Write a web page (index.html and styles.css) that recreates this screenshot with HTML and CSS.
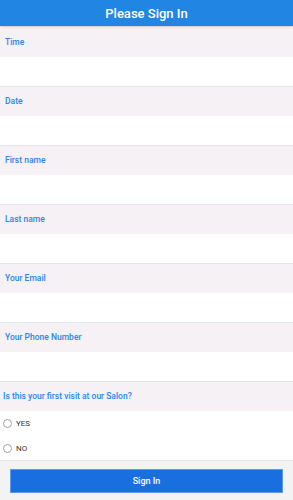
FILE: index.html
```html
<!DOCTYPE html>
<html lang="en">
<head>
    <meta charset="UTF-8">
    <meta name="viewport" content="width=device-width, initial-scale=1.0">
    <title>Please Sign In</title>
    <link rel="stylesheet" href="styles.css">
</head>
<body>
    <div class="header">Please Sign In</div>
    <form class="signin">
        <div class="field">
            <label class="field-label" for="time">Time</label>
            <input class="field-input" type="text" id="time" name="time">
        </div>
        <div class="field">
            <label class="field-label" for="date">Date</label>
            <input class="field-input" type="text" id="date" name="date">
        </div>
        <div class="field">
            <label class="field-label" for="first-name">First name</label>
            <input class="field-input" type="text" id="first-name" name="first-name">
        </div>
        <div class="field">
            <label class="field-label" for="last-name">Last name</label>
            <input class="field-input" type="text" id="last-name" name="last-name">
        </div>
        <div class="field">
            <label class="field-label" for="email">Your Email</label>
            <input class="field-input" type="email" id="email" name="email">
        </div>
        <div class="field">
            <label class="field-label" for="phone">Your Phone Number</label>
            <input class="field-input" type="tel" id="phone" name="phone">
        </div>
        <div class="field">
            <div class="field-label question">Is this your first visit at our Salon?</div>
            <div class="radios">
                <label class="radio"><input type="radio" name="first-visit" value="yes"> YES</label>
                <label class="radio"><input type="radio" name="first-visit" value="no"> NO</label>
            </div>
        </div>
        <div class="footer">
            <button type="submit" class="submit">Sign In</button>
        </div>
    </form>
</body>
</html>
```

FILE: styles.css
```css
body {
    margin: 0;
    font-family: Roboto, "Liberation Sans", sans-serif;
    background-color: #ffffff;
}
.header {
    height: 26px;
    line-height: 28px;
    background-color: #2185e4;
    color: #ffffff;
    font-size: 13px;
    font-weight: 500;
    text-align: center;
    box-shadow: 0 1px 2px rgba(0, 0, 0, 0.25);
    position: relative;
    z-index: 1;
}
.signin {
    margin: 0;
    padding-top: 2px;
}
.field {
    display: flex;
    flex-direction: column;
    border-bottom: 1px solid #e6e4e6;
}
.field-label {
    height: 29px;
    line-height: 29px;
    padding: 0 5px;
    background-color: #f6f1f5;
    color: #2b86e6;
    font-size: 8.5px;
    font-weight: 500;
}
.field-label.question {
    padding: 0 3px;
}
.field-input {
    height: 29px;
    border: none;
    padding: 0 5px;
    margin: 0;
    background: #ffffff;
    font-family: inherit;
    outline: none;
}
.radios {
    display: flex;
    flex-direction: column;
    gap: 8px;
    padding: 4px 3px 3px;
}
.radio {
    display: flex;
    align-items: center;
    gap: 4px;
    height: 17px;
    font-size: 8px;
    color: #333333;
}
.radio input {
    appearance: none;
    margin: 0;
    width: 9px;
    height: 9px;
    border: 1px solid #a0a0a0;
    border-radius: 50%;
}
.footer {
    background-color: #f4f3f4;
    padding: 8px 10px 7px;
    height: 39px;
    box-sizing: border-box;
}
.submit {
    display: block;
    width: 100%;
    height: 24px;
    background-color: #1a6fe0;
    border: 1px solid #5b9af0;
    color: #ffffff;
    font-family: inherit;
    font-size: 9px;
    font-weight: 500;
}
```
